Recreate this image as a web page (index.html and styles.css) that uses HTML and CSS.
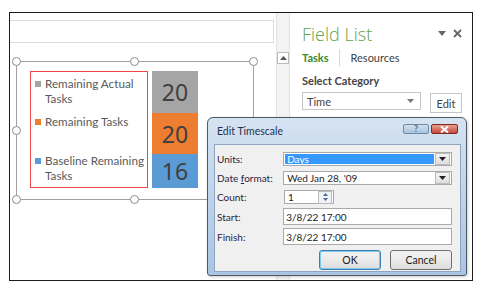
FILE: index.html
```html
<!DOCTYPE html>
<html>
<head>
<meta charset="utf-8">
<link rel="stylesheet" href="styles.css">
</head>
<body>
<div class="frame">
  <div class="canvas">
    <div class="topbar"></div>
    <div class="chart">
      <div class="selbox">
        <span class="h h-tl"></span><span class="h h-tm"></span><span class="h h-tr"></span>
        <span class="h h-ml"></span><span class="h h-mr"></span>
        <span class="h h-bl"></span><span class="h h-bm"></span><span class="h h-br"></span>
        <div class="legend">
          <div class="item"><span class="sq gray"></span><span>Remaining Actual<br>Tasks</span></div>
          <div class="item i2"><span class="sq orange"></span><span>Remaining Tasks</span></div>
          <div class="item i3"><span class="sq blue"></span><span>Baseline Remaining<br>Tasks</span></div>
        </div>
        <div class="bars">
          <div class="bar gray b1">20</div>
          <div class="bar orange b2">20</div>
          <div class="bar blue b3">16</div>
        </div>
      </div>
    </div>
  </div>
  <div class="scroll"><div class="up"><svg width="7" height="4" viewBox="0 0 7 4"><path d="M0 4 L3.5 0 L7 4Z" fill="#555"/></svg></div></div>
  <div class="panel">
    <div class="ptitle"><span>Field List</span>
      <span class="picons"><svg width="8" height="5" viewBox="0 0 8 5"><path d="M0 0H8L4 5Z" fill="#666"/></svg><svg width="9" height="9" viewBox="0 0 9 9"><path d="M1 1L8 8M8 1L1 8" stroke="#666" stroke-width="1.8"/></svg></span>
    </div>
    <div class="tabs"><span class="tab on">Tasks</span><span class="sep"></span><span class="tab">Resources</span></div>
    <div class="sc">Select Category</div>
    <div class="catrow">
      <div class="combo"><span>Time</span><svg width="7" height="4" viewBox="0 0 7 4"><path d="M0 0H7L3.5 4Z" fill="#777"/></svg></div>
      <div class="editbtn">Edit</div>
    </div>
  </div>

  <div class="dialog">
    <div class="dtitle"><span>Edit Timescale</span>
      <span class="dbtns"><span class="help">?</span><span class="close"><svg width="9" height="7" viewBox="0 0 9 7"><path d="M1 0.5L8 6.5M8 0.5L1 6.5" stroke="#fff" stroke-width="2"/></svg></span></span>
    </div>
    <div class="dbody">
      <div class="row"><label>Units:</label><div class="field sel"><span class="hl">Days</span><span class="dd"><svg width="7" height="4" viewBox="0 0 7 4"><path d="M0 0H7L3.5 4Z" fill="#222"/></svg></span></div></div>
      <div class="row"><label>Date <u>f</u>ormat:</label><div class="field sel"><span class="val">Wed Jan 28, '09</span><span class="dd"><svg width="7" height="4" viewBox="0 0 7 4"><path d="M0 0H7L3.5 4Z" fill="#222"/></svg></span></div></div>
      <div class="row"><label>Count:</label><div class="field count"><span class="val">1</span><span class="spin"><svg width="5" height="3" viewBox="0 0 5 3"><path d="M0 3L2.5 0L5 3Z" fill="#4a6a9a"/></svg><svg width="5" height="3" viewBox="0 0 5 3"><path d="M0 0H5L2.5 3Z" fill="#4a6a9a"/></svg></span></div></div>
      <div class="row r4"><label>Start:</label><div class="field txt"><span class="val">3/8/22 17:00</span></div></div>
      <div class="row r4"><label>Finish:</label><div class="field txt"><span class="val">3/8/22 17:00</span></div></div>
      <div class="btnrow"><div class="btn ok">OK</div><div class="btn">Cancel</div></div>
    </div>
  </div>
</div>
</body>
</html>
```

FILE: styles.css
```css
* { box-sizing: border-box; }
body { margin: 0; background: #fff; font-family: Lato, "Open Sans", sans-serif; }
.frame {
  position: relative;
  margin: 12px 0 0 9px;
  width: 464px; height: 269px;
  border: 1px solid #1a1a1a;
  display: flex;
}
.canvas { width: 266px; display: flex; flex-direction: column; }
.topbar { margin: 7px 2px 0 0; height: 23px; border: 1px solid #dcdcdc; border-left: none; }
.chart { padding: 18px 0 0 6px; }
.selbox {
  position: relative;
  width: 238px; height: 139px;
  border: 1px solid #a0a0a0;
  display: flex; align-items: flex-start;
  padding: 9px 0 0 13px;
}
.h { position: absolute; width: 9px; height: 9px; border-radius: 50%; background: #fff; border: 1px solid #8c8c8c; }
.h-tl { left: -5px; top: -5px; }
.h-tm { left: 113px; top: -5px; }
.h-tr { right: -5px; top: -5px; }
.h-ml { left: -5px; top: 64px; }
.h-mr { right: -5px; top: 64px; }
.h-bl { left: -5px; bottom: -5px; }
.h-bm { left: 113px; bottom: -5px; }
.h-br { right: -5px; bottom: -5px; }
.legend {
  width: 118px; height: 117px;
  border: 1px solid #f0474a;
  padding: 4px 0 0 4px;
  display: flex; flex-direction: column;
  color: #595959; font-size: 11.7px; line-height: 15px;
  white-space: nowrap;
}
.item { display: flex; align-items: flex-start; gap: 4px; }
.item.i2 { margin-top: 8px; }
.item.i3 { margin-top: 24px; }
.sq { width: 6px; height: 6px; margin-top: 5px; flex: none; }
.gray { background: #a5a5a5; }
.orange { background: #ed7d31; }
.blue { background: #5b9bd5; }
.bars { margin-left: 4px; width: 46px; display: flex; flex-direction: column; }
.bar { display: flex; align-items: center; justify-content: center; color: #404040; font-size: 23px; font-family: "Noto Sans", sans-serif; }
.b1 { height: 42px; }
.b2 { height: 41px; }
.b3 { height: 34px; }
.scroll { width: 14px; background: #f3f3f3; border-left: 1px solid #e2e2e2; border-right: 1px solid #e2e2e2; padding: 39px 0 0 0; }
.up { width: 12px; height: 12px; background: #fff; border: 1px solid #bdbdbd; display: flex; align-items: center; justify-content: center; }
.panel { flex: 1; padding: 9px 10px 0 12px; color: #444; }
.ptitle { display: flex; justify-content: space-between; align-items: flex-start; font-size: 18px; font-weight: 300; color: #5fa24a; line-height: 24px; font-family: "Open Sans", sans-serif; }
.picons { display: flex; gap: 7px; align-items: center; margin-top: 7px; }
.tabs { display: flex; align-items: center; margin-top: 3px; font-size: 11px; height: 16px; }
.tab.on { color: #3a8a2e; font-weight: bold; }
.sep { width: 1px; height: 17px; background: #d6d6d6; margin: 0 11px 0 10px; }
.tab { color: #444; }
.sc { margin-top: 9px; font-size: 11px; font-weight: bold; color: #444; }
.catrow { display: flex; align-items: flex-start; gap: 9px; margin-top: 5px; }
.combo { width: 119px; height: 18px; border: 1px solid #c6c6c6; display: flex; align-items: center; justify-content: space-between; padding: 0 6px 0 4px; font-size: 11px; }
.editbtn { width: 32px; height: 20px; margin-top: 1px; border: 1px solid #c6c6c6; font-size: 11px; display: flex; align-items: center; justify-content: center; }

.dialog {
  position: absolute; left: 197px; top: 104px;
  width: 260px; height: 159px;
  border: 1px solid #4e5966; border-radius: 6px 6px 3px 3px;
  background: linear-gradient(#d6e3f1, #c2d6ec 40%, #a9c5e3);
  padding: 0 5px 3px 6px;
  display: flex; flex-direction: column;
  font-family: Lato, sans-serif; font-size: 10px;
  box-shadow: 1px 1px 3px rgba(0,0,0,0.2);
}
.dtitle { height: 26px; display: flex; justify-content: space-between; align-items: center; padding: 0 3px 0 3px; color: #1e3350; font-size: 10.5px; }
.dbtns { display: flex; gap: 2px; margin-top: -4px; }
.help { width: 26px; height: 10px; border: 1px solid #6f8aa6; border-radius: 2px; background: linear-gradient(#d2e1f0, #a9c2dc); color: #4d6785; font-size: 9px; line-height: 8px; text-align: center; font-weight: bold; }
.close { width: 27px; height: 10px; border: 1px solid #7a2a22; border-radius: 2px; background: linear-gradient(#e8a090, #c8483a); display: flex; align-items: center; justify-content: center; }
.dbody { flex: 1; background: #f0f0f0; border: 1px solid #8fa4bd; padding: 5px 8px 0 2px; }
.row { display: flex; align-items: center; height: 18px; margin-bottom: 1px; color: #2a1f3c; white-space: nowrap; }
.row label { width: 67px; }
.field { height: 14px; background: #fff; border: 1px solid #a9a9a9; display: flex; align-items: center; font-size: 10px; color: #222; }
.sel { width: 171px; padding: 1px; }
.hl { flex: 1; height: 100%; background: #3399ff; color: #fff; padding-left: 2px; line-height: 11px; }
.val { flex: 1; padding-left: 2px; line-height: 12px; }
.dd { width: 15px; height: 12px; margin-left: 1px; border: 1px solid #bcbcbc; background: linear-gradient(#f4f4f4, #dedede); display: flex; align-items: center; justify-content: center; }
.count { width: 50px; padding: 1px; }
.spin { width: 14px; height: 13px; border: 1px solid #bcbcbc; background: #eef2f7; display: flex; flex-direction: column; align-items: center; justify-content: space-around; }
.row.r4 { height: 19px; }
.txt { width: 171px; height: 17px; }
.btnrow { display: flex; justify-content: flex-end; gap: 9px; margin-top: 4px; padding-right: 0; }
.btn { width: 62px; height: 20px; border: 1px solid #707070; border-radius: 3px; background: linear-gradient(#f2f2f2, #ebebeb 50%, #dcdcdc); display: flex; align-items: center; justify-content: center; color: #1a1a1a; font-size: 10.5px; }
.btn.ok { border-color: #3c7fb1; box-shadow: inset 0 0 0 1px #7ccbee; }
```
